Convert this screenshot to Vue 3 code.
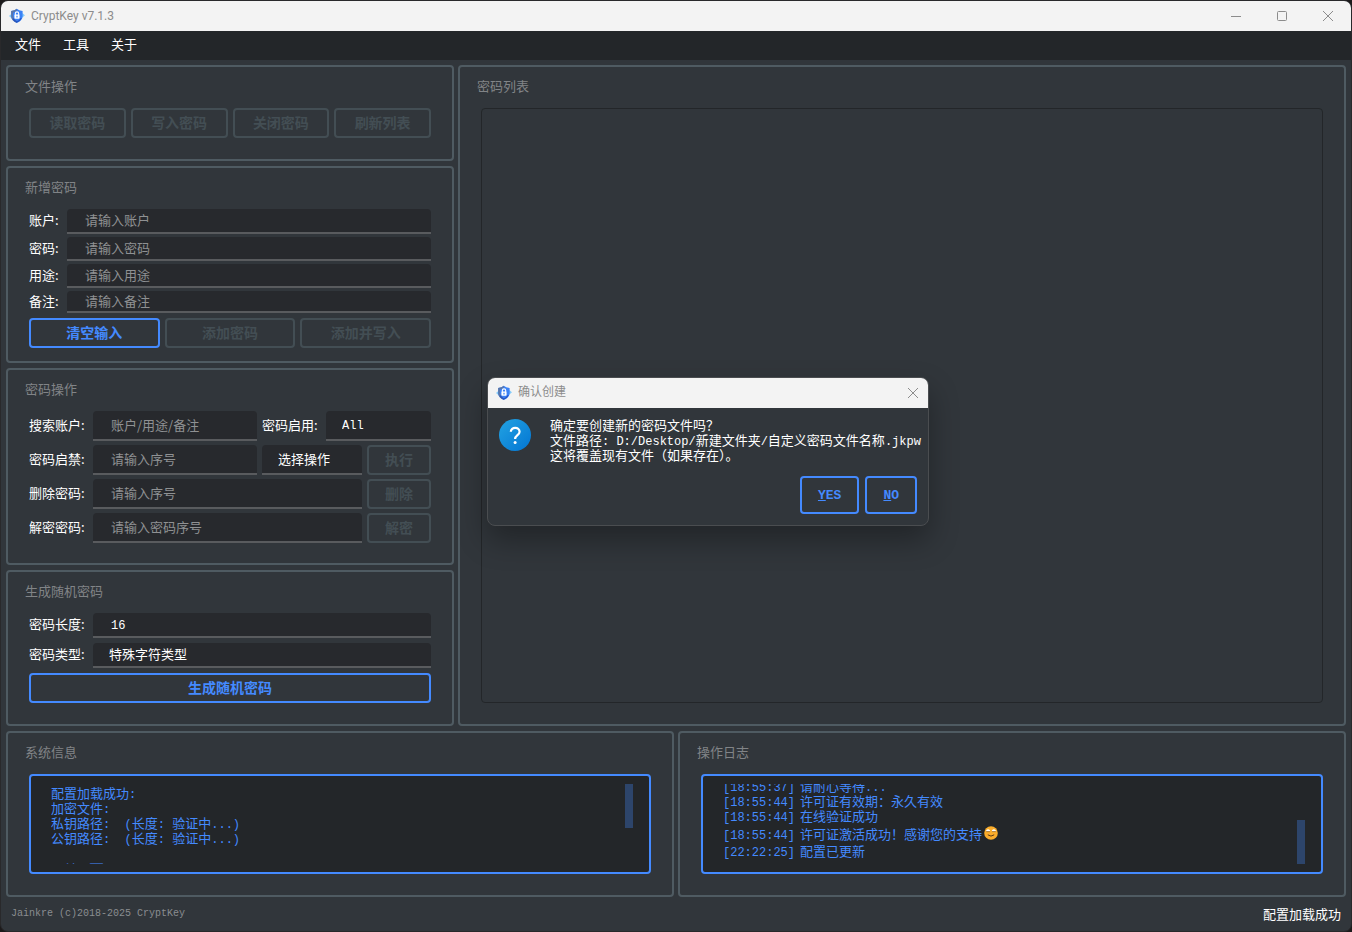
<script setup>
import { h, ref } from 'vue'

const menus = ['文件', '工具', '关于']
const fileActions = ['读取密码', '写入密码', '关闭密码', '刷新列表']
const fields = [
  { id: 'account', label: '账户:', hint: '请输入账户' },
  { id: 'password', label: '密码:', hint: '请输入密码' },
  { id: 'usage', label: '用途:', hint: '请输入用途' },
  { id: 'note', label: '备注:', hint: '请输入备注' }
]
const info = [
  '配置加载成功:',
  '加密文件:',
  '私钥路径:  (长度: 验证中...)',
  '公钥路径:  (长度: 验证中...)',
  '',
  '\u3000关\u3000￣'
]
const logs = [
  { time: '[18:55:37]', text: '请耐心等待...' },
  { time: '[18:55:44]', text: '许可证有效期：永久有效' },
  { time: '[18:55:44]', text: '在线验证成功' },
  { time: '[18:55:44]', text: '许可证激活成功！感谢您的支持', smile: true },
  { time: '[22:22:25]', text: '配置已更新' }
]
const length = ref('16')

// Latin runs are set in a narrower monospace than the Chinese text around them
const Mixed = (props) =>
  h('span', { class: 'mixed' },
    (props.text.match(/[\x20-\x7e]+|[^\x20-\x7e]+/g) || []).map((run) =>
      /^[\x20-\x7e]/.test(run) ? h('span', { class: 'latin' }, run) : run))
Mixed.props = ['text']

const Logo = () =>
  h('svg', { class: 'logo', viewBox: '0 0 16 16', 'aria-hidden': 'true' }, [
    h('path', { d: 'M0 8 3.4 5v6zM16 7.2 12.6 4.4v5.8z', fill: '#86ccfa' }),
    h('path', { d: 'M2.2 3Q6 2.800 7.800 .8 9.800 2.800 13.600 3v5.400Q13.200 12.600 7.800 15 2.600 12.600 2.200 8.400z', fill: '#3b82f6' }),
    h('path', { d: 'M2.200 3Q6 2.800 7.800 .8v2Q6 4.400 4 4.600v4q.5 2.900 3.800 4.600V15Q2.600 12.600 2.200 8.400z', fill: '#5a76a8' }),
    h('path', { d: 'M4 10.600q1.200 2.300 3.800 3.400 3-1.200 4.400-3.800', fill: 'none', stroke: '#2454c4', 'stroke-width': 1.200 }),
    h('path', { d: 'M6.300 7V5.600a1.700 1.700 0 0 1 3.400 0V7', fill: 'none', stroke: '#fff', 'stroke-width': 1.100 }),
    h('rect', { x: 5.400, y: 6.600, width: 5.200, height: 4.200, rx: 0.800, fill: '#fff' }),
    h('path', { d: 'M8 7.800v1.800', stroke: '#3b82f6', 'stroke-width': 1.200 })
  ])
</script>

<template>
  <div class="window">
    <header class="titlebar">
      <Logo />
      <h1>CryptKey v7.1.3</h1>
      <div class="controls">
        <button type="button" aria-label="Minimize"><svg viewBox="0 0 12 12"><path d="M1 6.500h10" /></svg></button>
        <button type="button" aria-label="Maximize"><svg viewBox="0 0 12 12"><rect x="1.500" y="1.500" width="9" height="9" rx="1" /></svg></button>
        <button type="button" aria-label="Close"><svg viewBox="0 0 12 12"><path d="M1 1l10 10M11 1L1 11" /></svg></button>
      </div>
    </header>

    <nav class="menubar">
      <button v-for="m in menus" :key="m" type="button">{{ m }}</button>
    </nav>

    <main class="content">
      <div class="upper">
        <div class="sidebar">
          <section class="panel">
            <h2>文件操作</h2>
            <div class="buttons">
              <button v-for="a in fileActions" :key="a" type="button" class="btn" disabled>{{ a }}</button>
            </div>
          </section>

          <section class="panel snug">
            <h2>新增密码</h2>
            <div class="entry">
              <template v-for="f in fields" :key="f.id">
                <label :for="f.id">{{ f.label }}</label>
                <input :id="f.id" class="field" type="text" :placeholder="f.hint" />
              </template>
            </div>
            <div class="buttons">
              <button type="button" class="btn">清空输入</button>
              <button type="button" class="btn" disabled>添加密码</button>
              <button type="button" class="btn" disabled>添加并写入</button>
            </div>
          </section>

          <section class="panel ops-panel">
            <h2>密码操作</h2>
            <div class="ops">
              <label for="search">搜索账户:</label>
              <input id="search" class="field" type="text" placeholder="账户/用途/备注" />
              <label for="enabled">密码启用:</label>
              <select id="enabled" class="field latin span2"><option>All</option></select>

              <label for="toggle">密码启禁:</label>
              <input id="toggle" class="field" type="text" placeholder="请输入序号" />
              <select class="field span2" aria-label="选择操作"><option>选择操作</option></select>
              <button type="button" class="btn" disabled>执行</button>

              <label for="remove">删除密码:</label>
              <input id="remove" class="field span3" type="text" placeholder="请输入序号" />
              <button type="button" class="btn" disabled>删除</button>

              <label for="decrypt">解密密码:</label>
              <input id="decrypt" class="field span3" type="text" placeholder="请输入密码序号" />
              <button type="button" class="btn" disabled>解密</button>
            </div>
          </section>

          <section class="panel">
            <h2>生成随机密码</h2>
            <div class="generate">
              <label for="length">密码长度:</label>
              <input id="length" v-model="length" class="field latin" type="text" />
              <label for="kind">密码类型:</label>
              <select id="kind" class="field"><option>特殊字符类型</option></select>
            </div>
            <div class="buttons">
              <button type="button" class="btn">生成随机密码</button>
            </div>
          </section>
        </div>

        <section class="panel list-panel">
          <h2>密码列表</h2>
          <div class="list"></div>
        </section>
      </div>

      <div class="lower">
        <section class="panel">
          <h2>系统信息</h2>
          <div class="console">
            <div class="lines">
              <p v-for="(line, i) in info" :key="i"><Mixed :text="line" /></p>
            </div>
            <div class="thumb"></div>
          </div>
        </section>
        <section class="panel">
          <h2>操作日志</h2>
          <div class="console">
            <div class="lines scrolled">
              <p v-for="(log, i) in logs" :key="i" :class="{ tall: log.smile }">
                <span class="latin time">{{ log.time }}</span>
                <Mixed :text="log.text" />
                <svg v-if="log.smile" class="smile" viewBox="0 0 14 14" role="img" aria-label="😊">
                  <circle cx="7" cy="7" r="6.800" fill="#fbad2b" />
                  <path d="M2.200 4.200Q4 2.500 6 4.200v1.300H2.200zM8 4.200q2-1.700 3.800 0v1.300H8z" fill="#fff" />
                  <path d="M2.200 5.600H6M8 5.600h3.800" fill="none" stroke="#8a5a1c" stroke-width=".7" />
                  <path d="M3.800 8.800q3.200 2.600 6.400 0" fill="none" stroke="#5b3a1a" stroke-width="1" />
                </svg>
              </p>
            </div>
            <div class="thumb low"></div>
          </div>
        </section>
      </div>
    </main>

    <footer class="status">
      <span class="copyright">Jainkre (c)2018-2025 CryptKey</span>
      <span>配置加载成功</span>
    </footer>

    <div class="dialog" role="dialog" aria-labelledby="dialog-title">
      <header class="titlebar">
        <Logo />
        <h2 id="dialog-title">确认创建</h2>
        <div class="controls">
          <button type="button" aria-label="Close"><svg viewBox="0 0 12 12"><path d="M1 1l10 10M11 1L1 11" /></svg></button>
        </div>
      </header>
      <div class="message">
        <svg class="question" viewBox="0 0 32 32" aria-hidden="true">
          <defs>
            <linearGradient id="q" x1="0" y1="0" x2="1" y2="1">
              <stop offset="0" stop-color="#23a3e2" />
              <stop offset="1" stop-color="#0275d3" />
            </linearGradient>
          </defs>
          <circle cx="16" cy="16" r="16" fill="url(#q)" />
          <path d="M11.800 12.800c0-5.400 8.800-5.200 8.800 0 0 3.300-4.500 3.500-4.500 7.200" fill="none" stroke="#fff" stroke-width="2.200" />
          <circle cx="16.100" cy="23.600" r="1.500" fill="#fff" />
        </svg>
        <div>
          <p><Mixed text="确定要创建新的密码文件吗？" /></p>
          <p><Mixed text="文件路径: D:/Desktop/新建文件夹/自定义密码文件名称.jkpw" /></p>
          <p><Mixed text="这将覆盖现有文件（如果存在）。" /></p>
        </div>
      </div>
      <div class="answers">
        <button type="button" class="btn"><u>Y</u>ES</button>
        <button type="button" class="btn"><u>N</u>O</button>
      </div>
    </div>
  </div>
</template>

<style>
body {
  background: #1c1a1b;
}
.mixed {
  white-space: pre;
}
.latin {
  font-family: "Liberation Mono", "Noto Sans CJK SC", monospace;
  font-size: 12px;
}
.logo {
  width: 16px;
  height: 16px;
  flex: none;
}
</style>

<style scoped>
* {
  box-sizing: border-box;
}
h1, h2, p {
  margin: 0;
  font-weight: 400;
}
button, input, select {
  font-family: inherit;
  font-size: 13px;
  color: inherit;
  background: none;
  border: 0;
  margin: 0;
  padding: 0;
  border-radius: 0;
}
.window {
  position: relative;
  display: flex;
  flex-direction: column;
  min-height: 100vh;
  border: 1px solid #29292b;
  border-radius: 8px;
  overflow: hidden;
  background: #31363b;
  color: #fff;
  font-family: "Noto Sans CJK SC", sans-serif;
  font-size: 13px;
  line-height: 15px;
}
.titlebar {
  display: flex;
  align-items: center;
  height: 30px;
  padding-left: 8px;
  gap: 6px;
  background: #f3f3f3;
  color: #8c8c8c;
}
.titlebar h1, .titlebar h2 {
  font-family: Roboto, "Noto Sans CJK SC", sans-serif;
  font-size: 12px;
  line-height: 16px;
}
.titlebar h2 {
  padding-bottom: 2px;
}
.controls {
  display: flex;
  margin-left: auto;
  height: 100%;
}
.controls button {
  display: flex;
  align-items: center;
  justify-content: center;
  width: 46px;
}
.controls svg {
  width: 12px;
  height: 12px;
  fill: none;
  stroke: #8c8c8c;
  stroke-width: 1;
}
.menubar {
  display: flex;
  gap: 22px;
  height: 29px;
  padding: 0 14px;
  background: #232629;
}
.menubar button {
  padding-bottom: 4px;
}
.content {
  flex: 1;
  display: flex;
  flex-direction: column;
  gap: 5px;
  padding: 5px 5px 0;
}
.upper {
  flex: 1;
  display: grid;
  grid-template-columns: 448px 1fr;
  gap: 4px;
}
.sidebar {
  display: flex;
  flex-direction: column;
  gap: 5px;
}
.lower {
  display: grid;
  grid-template-columns: 1fr 1fr;
  gap: 4px;
}
.panel {
  border: 2px solid #4f5b62;
  border-radius: 4px;
  padding: 11px 21px 21px;
  min-width: 0;
}
.panel.snug {
  padding-bottom: 13px;
}
.panel.ops-panel {
  padding-bottom: 20px;
}
.panel h2 {
  margin: 0 -4px 14px;
  font-size: 13px;
  line-height: 16px;
  color: #818487;
}
.buttons {
  display: flex;
  gap: 5px;
}
.btn {
  flex: 1;
  height: 30px;
  padding-bottom: 2px;
  border: 2px solid #448aff;
  border-radius: 4px;
  color: #448aff;
  font-size: 14px;
  font-weight: 700;
  line-height: 16px;
}
.btn:disabled {
  border-color: #434e54;
  color: #434e54;
}
.entry, .ops, .generate {
  display: grid;
  align-items: stretch;
}
.entry {
  grid-template-columns: 33px 1fr;
  grid-template-rows: 25px 24px 24px 22px;
  gap: 3px 5px;
  margin-bottom: 5px;
}
.ops {
  grid-template-columns: 59px 1fr 59px 36px 64px;
  grid-auto-rows: 30px;
  gap: 4px 5px;
}
.generate {
  grid-template-columns: 59px 1fr;
  grid-auto-rows: 25px;
  gap: 5px;
  margin-bottom: 5px;
}
label {
  align-self: center;
  padding-bottom: 4px;
  white-space: nowrap;
}
.span2 {
  grid-column: span 2;
}
.span3 {
  grid-column: span 3;
}
.field {
  width: 100%;
  min-width: 0;
  padding: 0 18px 2px;
  border-bottom: 2px solid #595b5e;
  border-radius: 4px 4px 0 0;
  background: #27292d;
  color: #fff;
}
.field.latin {
  padding-top: 2px;
  padding-bottom: 0;
  font-family: "Liberation Mono", monospace;
  font-size: 12px;
}
.field::placeholder {
  color: #8f9193;
  opacity: 1;
}
select.field {
  appearance: none;
  padding-left: 16px;
  padding-right: 16px;
}
.list-panel {
  display: flex;
  flex-direction: column;
}
.list {
  flex: 1;
  border: 1px solid #232629;
  border-radius: 4px;
}
.console {
  display: flex;
  height: 100px;
  padding: 8px 16px 8px 20px;
  border: 2px solid #448aff;
  border-radius: 4px;
  background: #232629;
  color: #448aff;
}
.lines {
  flex: 1;
  overflow: hidden;
  padding-top: 2px;
}
.lines p {
  display: flex;
  align-items: center;
  height: 15px;
}
.lines.scrolled {
  display: flex;
  flex-direction: column;
  justify-content: flex-end;
  padding: 0 0 6px;
}
.lines.scrolled p {
  flex: none;
  align-items: baseline;
}
.lines .tall.tall {
  height: 20px;
  padding-top: 3px;
}
.time {
  width: 77px;
}
.smile {
  width: 14px;
  height: 14px;
  margin-left: 2px;
  align-self: flex-start;
}
.thumb {
  width: 8px;
  height: 44px;
  background: #2d456b;
}
.thumb.low {
  align-self: flex-end;
}
.status {
  display: flex;
  align-items: center;
  justify-content: space-between;
  height: 34px;
  padding: 0 10px 2px;
}
.copyright {
  font-family: "Liberation Mono", monospace;
  font-size: 10px;
  color: #8a8d90;
}
.dialog {
  position: absolute;
  left: 486px;
  top: 376px;
  width: 442px;
  border: 1px solid #4a4d50;
  border-radius: 8px;
  overflow: hidden;
  background: #31363b;
  box-shadow: 0 14px 30px rgba(0, 0, 0, 0.32);
}
.dialog .controls button {
  width: 30px;
}
.message {
  display: flex;
  gap: 19px;
  padding: 9px 7px 0 11px;
  white-space: nowrap;
}
.message p {
  height: 15px;
}
.question {
  flex: none;
  width: 32px;
  height: 32px;
  margin-top: 2px;
}
.answers {
  display: flex;
  justify-content: flex-end;
  gap: 6px;
  padding: 14px 11px 11px;
}
.answers .btn {
  flex: none;
  height: 38px;
  padding: 2px 16px 0;
  font-family: "Liberation Mono", monospace;
  font-size: 13px;
}
</style>
